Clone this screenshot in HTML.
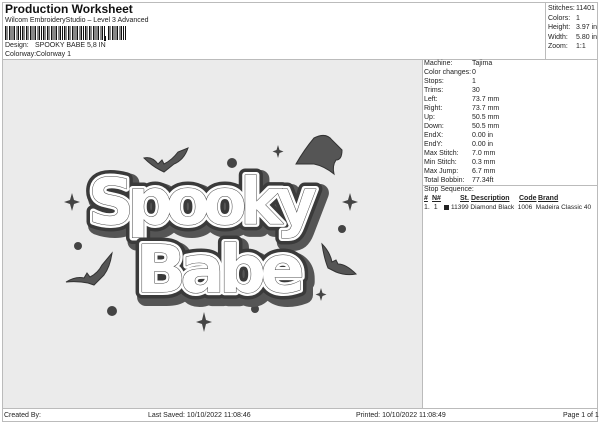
<!DOCTYPE html>
<html><head><meta charset="utf-8"><style>
*{margin:0;padding:0;box-sizing:border-box}
body{width:600px;height:424px;background:#fff;font-family:"Liberation Sans",sans-serif;color:#222;position:relative;overflow:hidden}
.a{position:absolute;white-space:nowrap}
.s{font-size:7px}
.frame{position:absolute;left:2px;top:2px;width:596px;height:420px;border:1px solid #bbb}
</style></head><body>
<div class="frame"></div>
<div class="a" style="left:5px;top:2px;font-size:12px;font-weight:bold;color:#111">Production Worksheet</div>
<div class="a s" style="left:5px;top:17px">Wilcom EmbroideryStudio – Level 3 Advanced</div>
<div class="a" style="left:5px;top:26px;width:100px;height:14px;background:repeating-linear-gradient(90deg,#111 0 1.5px,#fff 1.5px 2.5px,#111 2.5px 3.2px,#fff 3.2px 4.2px)"></div>
<div class="a" style="left:104px;top:36px;width:2px;height:5px;background:#111"></div>
<div class="a" style="left:108px;top:26px;width:18px;height:14px;background:repeating-linear-gradient(90deg,#111 0 1.5px,#fff 1.5px 2.5px,#111 2.5px 3.2px,#fff 3.2px 4.2px)"></div>
<div class="a s" style="left:5px;top:42px">Design:</div>
<div class="a s" style="left:35px;top:42px">SPOOKY BABE 5,8 IN</div>
<div class="a s" style="left:5px;top:51px">Colorway:</div>
<div class="a s" style="left:36px;top:51px">Colorway 1</div>
<div class="a" style="left:545px;top:2px;width:1px;height:57px;background:#bbb"></div>
<div class="a s" style="left:548px;top:4px;line-height:9.6px">Stitches:<br>Colors:<br>Height:<br>Width:<br>Zoom:</div>
<div class="a s" style="left:576px;top:4px;line-height:9.6px">11401<br>1<br>3.97 in<br>5.80 in<br>1:1</div>
<div class="a" style="left:2px;top:59px;width:596px;height:1px;background:#bbb"></div>
<div class="a" style="left:3px;top:60px;width:419px;height:348px;background:#ebebeb"></div>
<div class="a" style="left:422px;top:60px;width:1px;height:348px;background:#bbb"></div>
<div class="a s" style="left:424px;top:59px;line-height:9px">Machine:<br>Color changes:<br>Stops:<br>Trims:<br>Left:<br>Right:<br>Up:<br>Down:<br>EndX:<br>EndY:<br>Max Stitch:<br>Min Stitch:<br>Max Jump:<br>Total Bobbin:</div>
<div class="a s" style="left:472px;top:59px;line-height:9px">Tajima<br>0<br>1<br>30<br>73.7 mm<br>73.7 mm<br>50.5 mm<br>50.5 mm<br>0.00 in<br>0.00 in<br>7.0 mm<br>0.3 mm<br>6.7 mm<br>77.34ft</div>
<div class="a" style="left:423px;top:185px;width:175px;height:1px;background:#bbb"></div>
<div class="a s" style="left:424px;top:186px">Stop Sequence:</div>
<div class="a s" style="left:424px;top:195px;font-weight:bold;text-decoration:underline">#</div>
<div class="a s" style="left:432px;top:195px;font-weight:bold;text-decoration:underline">N#</div>
<div class="a s" style="left:460px;top:195px;font-weight:bold;text-decoration:underline">St.</div>
<div class="a s" style="left:471px;top:195px;font-weight:bold;text-decoration:underline">Description</div>
<div class="a s" style="left:519px;top:195px;font-weight:bold;text-decoration:underline">Code</div>
<div class="a s" style="left:538px;top:195px;font-weight:bold;text-decoration:underline">Brand</div>
<div class="a s" style="left:424px;top:204px">1.&nbsp; 1</div>
<div class="a" style="left:444px;top:205px;width:5px;height:5px;background:#222"></div>
<div class="a" style="left:451px;top:204px;font-size:6.5px">11399 Diamond Black&nbsp; 1006&nbsp; Madeira Classic 40</div>
<div class="a" style="left:2px;top:408px;width:596px;height:1px;background:#bbb"></div>
<div class="a s" style="left:4px;top:412px">Created By:</div>
<div class="a s" style="left:148px;top:412px">Last Saved: 10/10/2022 11:08:46</div>
<div class="a s" style="left:356px;top:412px">Printed: 10/10/2022 11:08:49</div>
<div class="a s" style="left:563px;top:412px">Page 1 of 1</div>

<svg class="a" style="left:0;top:0" width="600" height="424" viewBox="0 0 600 424">
<g fill="#555" stroke="#333" stroke-width="1">
<path d="M144 158 q8 -2 14 6 l4 -4 2 4 q8 -4 14 -12 l10 -4 q-4 12 -14 16 l-10 8 -4 -2 q-8 -4 -16 -12z"/>
<path d="M66 282 q10 -6 18 -4 l3 -5 3 4 q8 -4 12 -12 l10 -12 q-2 14 -8 22 l-10 10 -6 -2 q-10 -2 -22 -1z"/>
<path d="M322 244 q8 8 10 18 l4 -2 2 4 q8 0 18 10 q-10 2 -20 -2 l-8 -4 q-4 -10 -6 -24z"/>
<path d="M296 164 q8 -14 18 -26 q12 -6 18 2 q6 6 10 10 q0 10 -6 10 q-4 6 -2 14 q-10 -8 -20 -10 q-10 0 -18 0z"/>
</g>
<g fill="#444">
<path d="M72 193 l2 7 6 2 -6 2 -2 7 -2 -7 -6 -2 6 -2z"/>
<path d="M204 312 l2 8 6 2 -6 2 -2 8 -2 -8 -6 -2 6 -2z"/>
<path d="M350 193 l2 7 6 2 -6 2 -2 7 -2 -7 -6 -2 6 -2z"/>
<path d="M321 288 l1.5 5 4 1.5 -4 1.5 -1.5 5 -1.5 -5 -4 -1.5 4 -1.5z"/>
<path d="M278 145 l1.5 5 4 1.5 -4 1.5 -1.5 5 -1.5 -5 -4 -1.5 4 -1.5z"/>
<circle cx="232" cy="163" r="5"/><circle cx="78" cy="246" r="4"/><circle cx="112" cy="311" r="5"/>
<circle cx="342" cy="229" r="4"/><circle cx="255" cy="309" r="4"/>
</g>
<g font-family="DejaVu Sans,sans-serif" font-weight="bold" stroke-linejoin="round" paint-order="stroke">
<text x="92" y="228" font-size="64" fill="#555" stroke="#555" stroke-width="18" letter-spacing="-7">Spooky</text>
<text x="88" y="224" font-size="64" fill="#fff" stroke="#3a3a3a" stroke-width="13" letter-spacing="-7">Spooky</text>
<text x="88" y="224" font-size="64" fill="#fff" stroke="#fff" stroke-width="6" letter-spacing="-7">Spooky</text>
<text x="88" y="224" font-size="64" fill="#fff" stroke="#444" stroke-width="1" letter-spacing="-7">Spooky</text>
<text x="140" y="297" font-size="66" fill="#555" stroke="#555" stroke-width="18" letter-spacing="-6">Babe</text>
<text x="136" y="292" font-size="66" fill="#fff" stroke="#3a3a3a" stroke-width="13" letter-spacing="-6">Babe</text>
<text x="136" y="292" font-size="66" fill="#fff" stroke="#fff" stroke-width="6" letter-spacing="-6">Babe</text>
<text x="136" y="292" font-size="66" fill="#fff" stroke="#444" stroke-width="1" letter-spacing="-6">Babe</text>
</g>
</svg>
</body></html>
